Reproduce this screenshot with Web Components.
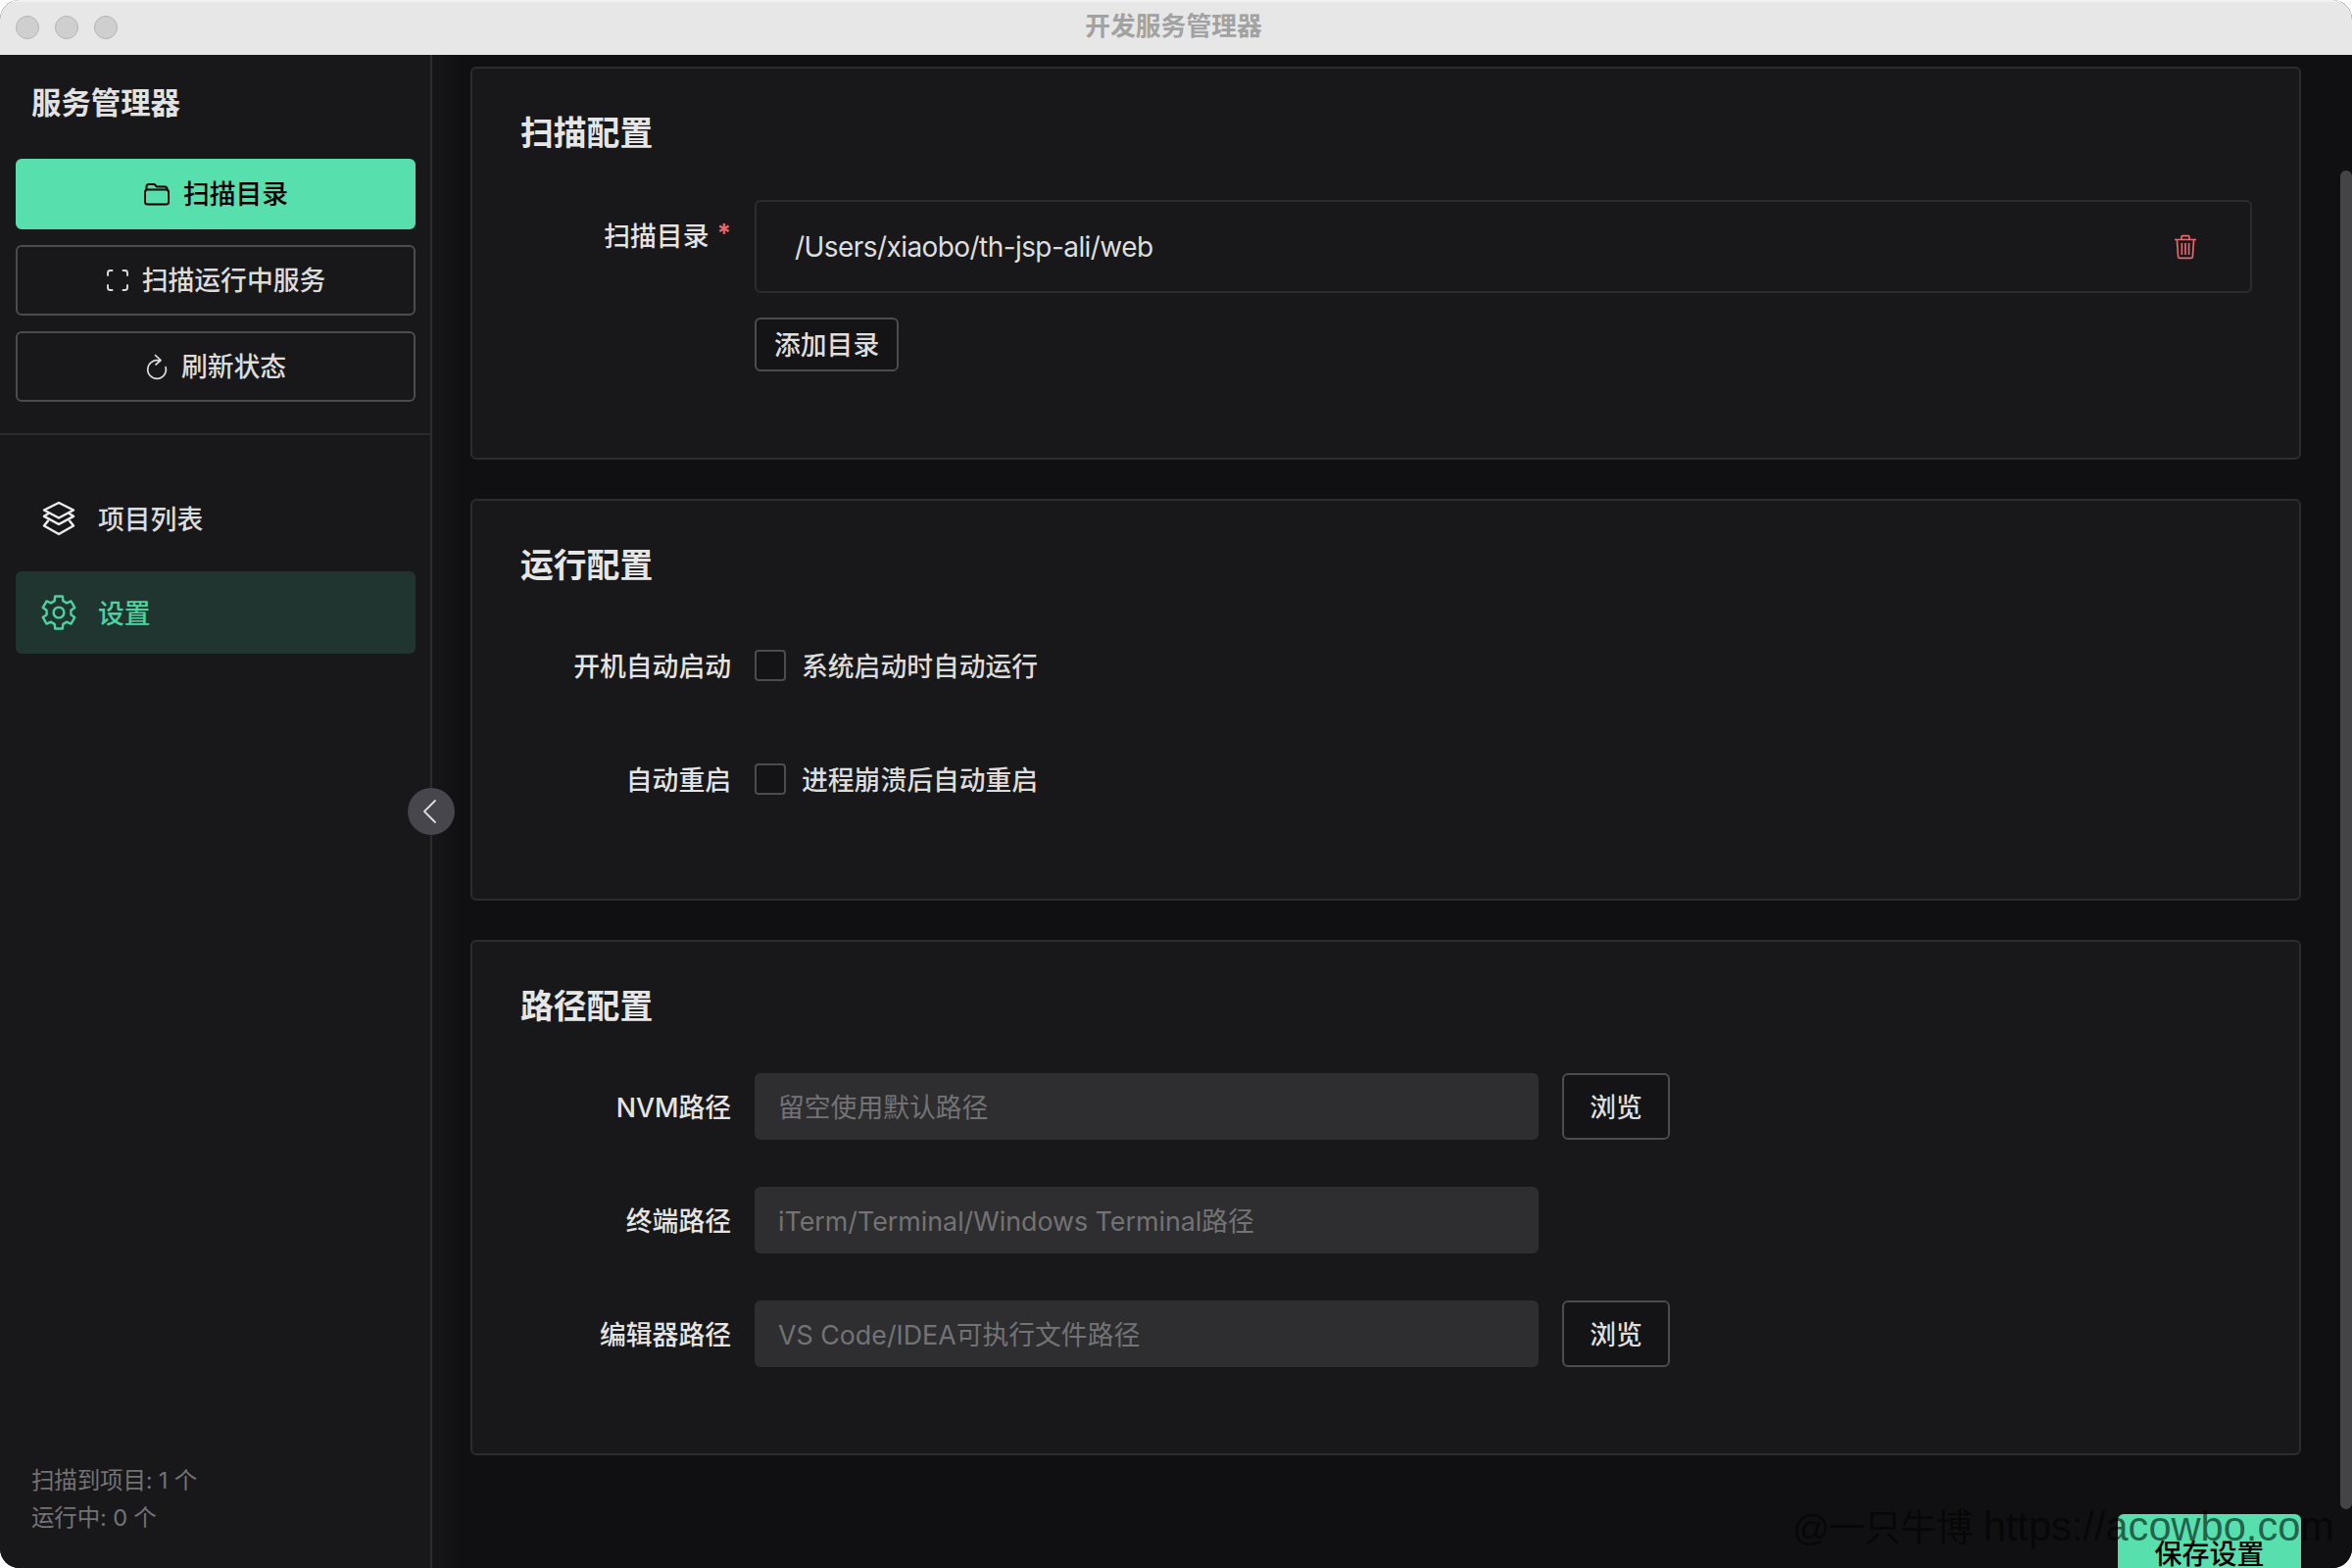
<!DOCTYPE html>
<html lang="zh-CN">
<head>
<meta charset="utf-8">
<title>开发服务管理器</title>
<style>
  html, body { margin: 0; padding: 0; background: #fff; }
  body { font-family: Inter, "Noto Sans CJK SC", sans-serif; }
</style>
</head>
<body>
<dev-window>
  <title-bar slot="title">开发服务管理器</title-bar>

  <side-bar slot="side" heading="服务管理器">
    <side-button slot="actions" kind="primary" icon="folder">扫描目录</side-button>
    <side-button slot="actions" icon="scan">扫描运行中服务</side-button>
    <side-button slot="actions" icon="refresh">刷新状态</side-button>
    <nav-item slot="nav" icon="layers">项目列表</nav-item>
    <nav-item slot="nav" icon="gear" active>设置</nav-item>
    <span slot="stats">扫描到项目: 1 个</span>
    <span slot="stats">运行中: 0 个</span>
  </side-bar>

  <main-panel slot="main">
    <settings-card heading="扫描配置">
      <form-row label="扫描目录" required top>
        <dir-item>/Users/xiaobo/th-jsp-ali/web</dir-item>
        <plain-button class="add">添加目录</plain-button>
      </form-row>
    </settings-card>

    <settings-card heading="运行配置">
      <form-row label="开机自动启动"><check-option>系统启动时自动运行</check-option></form-row>
      <form-row label="自动重启"><check-option>进程崩溃后自动重启</check-option></form-row>
    </settings-card>

    <settings-card heading="路径配置">
      <form-row label="NVM路径"><path-field placeholder="留空使用默认路径" browse></path-field></form-row>
      <form-row label="终端路径"><path-field placeholder="iTerm/Terminal/Windows Terminal路径"></path-field></form-row>
      <form-row label="编辑器路径"><path-field placeholder="VS Code/IDEA可执行文件路径" browse></path-field></form-row>
    </settings-card>

    <save-button>保存设置</save-button>
  </main-panel>
</dev-window>

<script>
const FONT = 'Inter, "Noto Sans CJK SC", sans-serif';

// six tooth cog, worked out once instead of a long hand written path
function gearPath() {
  const pt = (r, deg) => {
    const a = (deg * Math.PI) / 180;
    return (18 + r * Math.cos(a)).toFixed(2) + " " + (18 + r * Math.sin(a)).toFixed(2);
  };
  let d = "";
  for (let i = 0; i < 6; i++) {
    const c = i * 60 - 90;
    d += (i ? "L" : "M") + pt(17, c - 13) + "L" + pt(17, c + 13) + "L" + pt(12.6, c + 20) + "L" + pt(12.6, c + 40);
  }
  return d + "Z";
}

const ICONS = {
  folder: { w: 28, h: 24, svg: `<g fill="none" stroke="currentColor" stroke-width="2" stroke-linejoin="round">
      <rect x="2" y="7.5" width="24" height="15" rx="2.5"/>
      <path d="M3.5 7.5V4.5a2.5 2.5 0 0 1 2.5-2.5h5.5l2.5 2.5h8a2.5 2.5 0 0 1 2.5 2.5v1"/></g>` },
  scan: { w: 24, h: 24, svg: `<path fill="none" stroke="currentColor" stroke-width="1.9" stroke-linecap="round"
      d="M6.5 2H4.5A2.5 2.5 0 0 0 2 4.500V7M17.500 2h2A2.500 2.500 0 0 1 22 4.500V7M2 17v2.500A2.500 2.500 0 0 0 4.500 22H6.500M22 17v2.500a2.500 2.500 0 0 1-2.500 2.500h-2"/>` },
  refresh: { w: 24, h: 28, svg: `<path fill="none" stroke="currentColor" stroke-width="1.700" stroke-linecap="round" stroke-linejoin="round"
      d="M15.500 8.400A9.300 9.300 0 1 0 21 14.500M10.500 2.500l5.500 5.200-5 4.300"/>` },
  layers: { w: 36, h: 36, svg: `<g fill="none" stroke="currentColor" stroke-width="2.500" stroke-linejoin="round" stroke-linecap="round">
      <path d="M18 2 33 9.500 18 17.500 3 9.500Z"/>
      <path d="M7 13.300 3 15.800 18 24 33 15.800 29 13.300"/>
      <path d="M7 20.500 3 25.500 18 34 33 25.500 29 20.500"/></g>` },
  gear: { w: 36, h: 36, svg: `<g fill="none" stroke="currentColor" stroke-width="2.400" stroke-linejoin="round">
      <path d="${gearPath()}"/><circle cx="18" cy="18" r="5.400"/></g>` },
  trash: { w: 24, h: 26, svg: `<g fill="none" stroke="currentColor" stroke-width="1.700" stroke-linejoin="round">
      <path d="M1 5.500H23M8 5.500V2.800a1.200 1.200 0 0 1 1.200-1.200h5.600A1.200 1.200 0 0 1 16 2.800V5.500"/>
      <path d="M3.400 5.500 4.600 23a1.500 1.500 0 0 0 1.500 1.400h11.800a1.500 1.500 0 0 0 1.500-1.400L20.600 5.500"/>
      <path d="M8.400 9V21M12 9V21M15.600 9V21"/></g>` },
  chevron: { w: 16, h: 26, svg: `<path fill="none" stroke="currentColor" stroke-width="1.800" stroke-linecap="round" stroke-linejoin="round" d="M13 2 2 13 13 24"/>` },
};

function iconMarkup(name) {
  const icon = ICONS[name];
  return `<svg width="${icon.w}" height="${icon.h}" viewBox="0 0 ${icon.w} ${icon.h}" aria-hidden="true">${icon.svg}</svg>`;
}

class DevWindow extends HTMLElement {
  constructor() {
    super();
    this.attachShadow({ mode: "open" });
    this.shadowRoot.innerHTML = `
      <style>
        :host {
          display: flex;
          flex-direction: column;
          position: relative;
          width: 2400px;
          height: 1600px;
          overflow: hidden;
          border-radius: 20px;
          background: #101012;
          font-family: ${FONT};
        }
        #body { flex: 1; display: flex; min-height: 0; }
        #toggle {
          position: absolute;
          left: 416px;
          top: 804px;
          width: 48px;
          height: 48px;
          border-radius: 50%;
          background: #47464c;
          color: #dcdcdc;
          display: flex;
          align-items: center;
          justify-content: center;
        }
        #toggle svg { display: block; margin-right: 3px; }
        #mark {
          position: absolute;
          left: 1829px;
          top: 1533px;
          font: 41.600px/50px "Liberation Sans", "Noto Sans CJK SC", sans-serif;
          color: rgba(0, 0, 0, 0.58);
          white-space: nowrap;
        }
        #mark span { font-size: 37.500px; letter-spacing: -1px; }
      </style>
      <slot name="title"></slot>
      <div id="body">
        <slot name="side"></slot>
        <slot name="main"></slot>
      </div>
      <div id="toggle">${iconMarkup("chevron")}</div>
      <div id="mark"><span>@一只牛博</span> https://acowbo.com</div>
    `;
  }
}

class TitleBar extends HTMLElement {
  constructor() {
    super();
    this.attachShadow({ mode: "open" });
    this.shadowRoot.innerHTML = `
      <style>
        :host {
          display: flex;
          align-items: center;
          justify-content: center;
          position: relative;
          box-sizing: border-box;
          height: 56px;
          padding-bottom: 7px;
          flex: none;
          background: #e7e7e7;
          box-shadow: inset 0 2px 0 #f1f1f1;
          color: #a2a2a2;
          font-weight: 700;
          font-size: 25.800px;
        }
        #lights { position: absolute; left: 16px; top: 16px; display: flex; gap: 16px; }
        #lights i {
          width: 24px;
          height: 24px;
          box-sizing: border-box;
          border-radius: 50%;
          background: #cfcfcf;
          border: 1px solid #b4b4b4;
        }
        span { margin-right: 5px; }
      </style>
      <div id="lights"><i></i><i></i><i></i></div>
      <span><slot></slot></span>
    `;
  }
}

class SideBar extends HTMLElement {
  constructor() {
    super();
    this.attachShadow({ mode: "open" });
    this.shadowRoot.innerHTML = `
      <style>
        :host {
          display: flex;
          flex-direction: column;
          flex: none;
          box-sizing: border-box;
          width: 441px;
          height: 100%;
          background: #18181a;
          border-right: 2px solid #2c2c2e;
        }
        h1 {
          margin: 0;
          padding: 31px 16px 0 32px;
          height: 106px;
          box-sizing: border-box;
          font-size: 30.400px;
          line-height: 36px;
          font-weight: 700;
          color: #e2e2e2;
        }
        #actions {
          display: flex;
          flex-direction: column;
          gap: 16px;
          padding: 0 15px 32px 16px;
          border-bottom: 2px solid #2a2a2c;
        }
        #nav {
          display: flex;
          flex-direction: column;
          gap: 12px;
          padding: 43px 15px 0 16px;
        }
        #stats {
          margin-top: auto;
          padding: 0 0 32px 32px;
          display: flex;
          flex-direction: column;
          font-size: 23.500px;
          letter-spacing: -0.150px;
          line-height: 38px;
          color: #737375;
        }
        ::slotted(span) { display: block; }
      </style>
      <h1></h1>
      <div id="actions"><slot name="actions"></slot></div>
      <div id="nav"><slot name="nav"></slot></div>
      <div id="stats"><slot name="stats"></slot></div>
    `;
    this.shadowRoot.querySelector("h1").textContent = this.getAttribute("heading");
  }
}

class SideButton extends HTMLElement {
  constructor() {
    super();
    this.attachShadow({ mode: "open" });
    this.shadowRoot.innerHTML = `
      <style>
        :host {
          display: flex;
          align-items: center;
          justify-content: center;
          gap: 13px;
          height: 72px;
          box-sizing: border-box;
          border: 2px solid #4c4c4e;
          border-radius: 6px;
          color: #dcdcdc;
          font-size: 26.800px;
          font-weight: 500;
        }
        :host([kind="primary"]) {
          background: #58dfae;
          border-color: #58dfae;
          color: #000;
        }
        svg { display: block; flex: none; }
        span { padding-bottom: 3px; }
      </style>
      ${iconMarkup(this.getAttribute("icon"))}
      <span><slot></slot></span>
    `;
  }
}

class NavItem extends HTMLElement {
  constructor() {
    super();
    this.attachShadow({ mode: "open" });
    this.shadowRoot.innerHTML = `
      <style>
        :host {
          display: flex;
          align-items: center;
          gap: 23px;
          height: 84px;
          padding-left: 26px;
          border-radius: 6px;
          color: #dcdcdc;
          font-size: 26.800px;
          font-weight: 500;
        }
        :host([active]) { background: #213530; color: #4bd3a1; }
        svg { display: block; flex: none; }
        :host(:not([active])) svg { color: #ececec; }
        span { padding-bottom: 1px; margin-left: -1px; }
      </style>
      ${iconMarkup(this.getAttribute("icon"))}
      <span><slot></slot></span>
    `;
  }
}

class MainPanel extends HTMLElement {
  constructor() {
    super();
    this.attachShadow({ mode: "open" });
    this.shadowRoot.innerHTML = `
      <style>
        :host {
          display: block;
          flex: 1;
          min-width: 0;
          height: 100%;
          position: relative;
          overflow: hidden;
          background: linear-gradient(90deg, #161618, #101012 28px);
        }
        #scroll {
          display: flex;
          flex-direction: column;
          gap: 40px;
          padding: 12px 52px 0 39px;
        }
        #thumb {
          position: absolute;
          right: 0;
          top: 118px;
          width: 12px;
          height: 1366px;
          border-radius: 6px;
          background: #444446;
        }
      </style>
      <div id="scroll"><slot></slot></div>
      <div id="thumb"></div>
    `;
  }
}

class SettingsCard extends HTMLElement {
  constructor() {
    super();
    this.attachShadow({ mode: "open" });
    this.shadowRoot.innerHTML = `
      <style>
        :host {
          display: block;
          box-sizing: border-box;
          padding: 41px 48px 40px 49px;
          background: #18181a;
          border: 2px solid #2c2c2e;
          border-radius: 6px;
        }
        h2 {
          margin: 0 0 43px;
          font-size: 33.800px;
          line-height: 50px;
          font-weight: 700;
          color: #e6e6e6;
        }
      </style>
      <h2></h2>
      <slot></slot>
    `;
    this.shadowRoot.querySelector("h2").textContent = this.getAttribute("heading");
  }
}

class FormRow extends HTMLElement {
  constructor() {
    super();
    this.attachShadow({ mode: "open" });
    this.shadowRoot.innerHTML = `
      <style>
        :host {
          display: grid;
          grid-template-columns: 215px 1fr;
          column-gap: 24px;
          margin-bottom: 48px;
        }
        label {
          display: flex;
          align-items: center;
          justify-content: flex-end;
          box-sizing: border-box;
          height: 68px;
          padding-bottom: 1.500px;
          font-size: 26.800px;
          font-weight: 500;
          color: #e4e4e4;
          white-space: nowrap;
        }
        :host([top]) label { height: 72px; }
        b {
          font-weight: 700;
          color: #e5686e;
          margin-left: 8px;
          font-size: 26px;
          position: relative;
          top: -2px;
        }
        #control { display: flex; flex-direction: column; align-items: flex-start; min-height: 68px; justify-content: center; }
        ::slotted(.add) { margin-top: 25px; }
      </style>
      <label></label>
      <div id="control"><slot></slot></div>
    `;
    const label = this.shadowRoot.querySelector("label");
    label.textContent = this.getAttribute("label");
    if (this.hasAttribute("required")) {
      const star = document.createElement("b");
      star.textContent = "*";
      label.append(star);
    }
  }
}

class DirItem extends HTMLElement {
  constructor() {
    super();
    this.attachShadow({ mode: "open" });
    this.shadowRoot.innerHTML = `
      <style>
        :host {
          display: flex;
          align-items: center;
          justify-content: space-between;
          box-sizing: border-box;
          width: 100%;
          height: 95px;
          padding: 0 54px 0 39px;
          border: 2px solid #2c2c2e;
          border-radius: 6px;
          color: #dedede;
          font-size: 28px;
          letter-spacing: -0.570px;
        }
        svg { display: block; color: #e5686e; }
      </style>
      <span><slot></slot></span>
      ${iconMarkup("trash")}
    `;
  }
}

class PlainButton extends HTMLElement {
  constructor() {
    super();
    this.attachShadow({ mode: "open" });
    this.shadowRoot.innerHTML = `
      <style>
        :host {
          display: inline-flex;
          align-items: center;
          justify-content: center;
          box-sizing: border-box;
          height: 55px;
          padding: 0 18px 3px;
          border: 2px solid #4c4c4e;
          border-radius: 6px;
          background: #141416;
          color: #dedede;
          font-size: 26.800px;
          font-weight: 500;
          white-space: nowrap;
        }
        :host([tall]) { height: 68px; width: 110px; padding: 0 0 2px; margin-left: 24px; }
      </style>
      <slot></slot>
    `;
  }
}

class CheckOption extends HTMLElement {
  constructor() {
    super();
    this.attachShadow({ mode: "open" });
    this.shadowRoot.innerHTML = `
      <style>
        :host {
          display: inline-flex;
          align-items: center;
          gap: 16px;
          color: #dcdcdc;
          font-size: 26.800px;
          font-weight: 500;
        }
        i {
          width: 32px;
          height: 32px;
          box-sizing: border-box;
          border: 2px solid #4c4c4e;
          border-radius: 4px;
          background: #141416;
        }
        span { padding-bottom: 1.500px; }
      </style>
      <i></i>
      <span><slot></slot></span>
    `;
  }
}

class PathField extends HTMLElement {
  constructor() {
    super();
    this.attachShadow({ mode: "open" });
    this.shadowRoot.innerHTML = `
      <style>
        :host { display: flex; align-items: stretch; }
        #box {
          display: flex;
          align-items: center;
          box-sizing: border-box;
          width: 800px;
          height: 68px;
          padding: 0 24px 1.500px;
          border-radius: 6px;
          background: #2e2e30;
          color: #737375;
          font-size: 26.800px;
          white-space: nowrap;
        }
      </style>
      <div id="box"></div>
      ${this.hasAttribute("browse") ? "<plain-button tall>浏览</plain-button>" : ""}
    `;
    this.shadowRoot.querySelector("#box").textContent = this.getAttribute("placeholder");
  }
}

class SaveButton extends HTMLElement {
  constructor() {
    super();
    this.attachShadow({ mode: "open" });
    this.shadowRoot.innerHTML = `
      <style>
        :host {
          display: flex;
          align-items: center;
          justify-content: center;
          align-self: flex-end;
          box-sizing: border-box;
          width: 187px;
          height: 82px;
          margin-top: 20px;
          padding-bottom: 5px;
          border-radius: 6px;
          background: #58dfae;
          color: #000;
          font-size: 28px;
          font-weight: 500;
        }
      </style>
      <slot></slot>
    `;
  }
}

customElements.define("plain-button", PlainButton);
customElements.define("dev-window", DevWindow);
customElements.define("title-bar", TitleBar);
customElements.define("side-bar", SideBar);
customElements.define("side-button", SideButton);
customElements.define("nav-item", NavItem);
customElements.define("main-panel", MainPanel);
customElements.define("settings-card", SettingsCard);
customElements.define("form-row", FormRow);
customElements.define("dir-item", DirItem);
customElements.define("check-option", CheckOption);
customElements.define("path-field", PathField);
customElements.define("save-button", SaveButton);
</script>
</body>
</html>
